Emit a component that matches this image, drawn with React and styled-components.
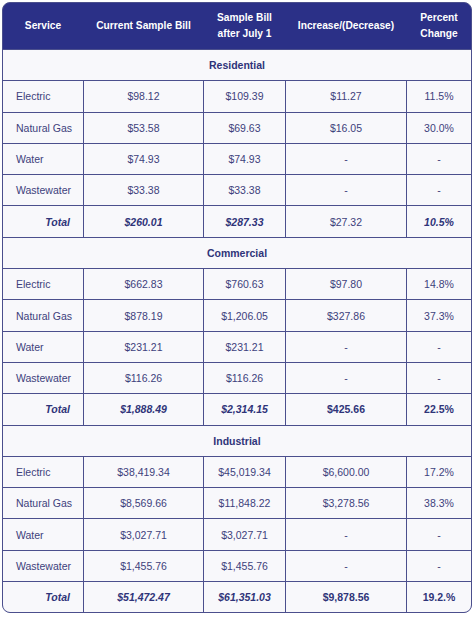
import { Fragment } from "react";
import styled, { createGlobalStyle } from "styled-components";

const GlobalStyle = createGlobalStyle`
    body {
        margin: 0;
        background: #fff;
        font-family: "Liberation Sans", Arial, sans-serif;
    }
`

const COLUMNS = "80px 119px 81px 120px 1fr";

const RateTable = styled.div`
    width: 468px;
    margin: 2px 0 0 2px;
    border: 1px solid #4b4f8d;
    border-radius: 8px;
    overflow: hidden;
    background-color: #4b4f8d;
`
const HeadRow = styled.div`
    display: grid;
    grid-template-columns: ${COLUMNS};
    column-gap: 1px;
    height: 46px;
    background-color: #2b3087;
    border-bottom: 1px solid #4b4f8d;
`
const HeadCell = styled.div`
    display: flex;
    align-items: center;
    justify-content: center;
    text-align: center;
    color: #fff;
    font-size: 10.2px;
    font-weight: bold;
    line-height: 16px;
`
const Body = styled.div`
    display: grid;
    grid-template-columns: ${COLUMNS};
    grid-auto-rows: 30.3px;
    gap: 1px;
`
const Section = styled.div`
    grid-column: 1 / -1;
    display: flex;
    align-items: center;
    justify-content: center;
    background-color: #f8f8fb;
    color: #2f3479;
    font-size: 10.5px;
    font-weight: bold;
`
const Cell = styled.div`
    display: flex;
    align-items: center;
    justify-content: ${({ align }) => align || "center"};
    padding: 0 13px;
    white-space: nowrap;
    background-color: #f8f8fb;
    color: #3d417c;
    font-size: 10.5px;
    font-weight: ${({ bold }) => (bold ? "bold" : "normal")};
    font-style: ${({ italic }) => (italic ? "italic" : "normal")};
    ${({ bold }) => bold && "color: #2f3479;"}
`

const sections = [
    {
        name: "Residential",
        rows: [
            ["Electric", "$98.12", "$109.39", "$11.27", "11.5%"],
            ["Natural Gas", "$53.58", "$69.63", "$16.05", "30.0%"],
            ["Water", "$74.93", "$74.93", "-", "-"],
            ["Wastewater", "$33.38", "$33.38", "-", "-"],
        ],
        total: ["$260.01", "$287.33", "$27.32", "10.5%"],
        totalStyle: [{ bold: true, italic: true }, { bold: true, italic: true }, {}, { bold: true, italic: true }],
    },
    {
        name: "Commercial",
        rows: [
            ["Electric", "$662.83", "$760.63", "$97.80", "14.8%"],
            ["Natural Gas", "$878.19", "$1,206.05", "$327.86", "37.3%"],
            ["Water", "$231.21", "$231.21", "-", "-"],
            ["Wastewater", "$116.26", "$116.26", "-", "-"],
        ],
        total: ["$1,888.49", "$2,314.15", "$425.66", "22.5%"],
        totalStyle: [{ bold: true, italic: true }, { bold: true, italic: true }, { bold: true }, { bold: true }],
    },
    {
        name: "Industrial",
        rows: [
            ["Electric", "$38,419.34", "$45,019.34", "$6,600.00", "17.2%"],
            ["Natural Gas", "$8,569.66", "$11,848.22", "$3,278.56", "38.3%"],
            ["Water", "$3,027.71", "$3,027.71", "-", "-"],
            ["Wastewater", "$1,455.76", "$1,455.76", "-", "-"],
        ],
        total: ["$51,472.47", "$61,351.03", "$9,878.56", "19.2.%"],
        totalStyle: [{ bold: true, italic: true }, { bold: true, italic: true }, { bold: true }, { bold: true }],
    },
];

const App = () => {
    return (
        <>
            <GlobalStyle />
            <RateTable>
                <HeadRow>
                    <HeadCell>Service</HeadCell>
                    <HeadCell>Current Sample Bill</HeadCell>
                    <HeadCell>Sample Bill<br />after July 1</HeadCell>
                    <HeadCell>Increase/(Decrease)</HeadCell>
                    <HeadCell>Percent<br />Change</HeadCell>
                </HeadRow>
                <Body>
                    {sections.map((section) => (
                        <Fragment key={section.name}>
                            <Section>{section.name}</Section>
                            {section.rows.map((row) =>
                                row.map((value, i) => (
                                    <Cell key={row[0] + i} align={i === 0 ? "flex-start" : "center"}>
                                        {value}
                                    </Cell>
                                ))
                            )}
                            <Cell align="flex-end" bold italic>Total</Cell>
                            {section.total.map((value, i) => (
                                <Cell key={"total" + i} {...section.totalStyle[i]}>
                                    {value}
                                </Cell>
                            ))}
                        </Fragment>
                    ))}
                </Body>
            </RateTable>
        </>
    )
};

export default App;
